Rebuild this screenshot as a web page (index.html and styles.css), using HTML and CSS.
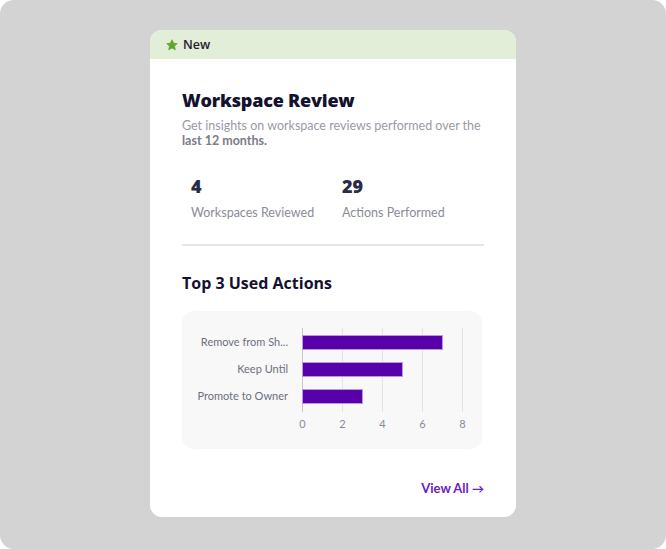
FILE: index.html
```html
<!DOCTYPE html>
<html lang="en">
<head>
  <meta charset="UTF-8">
  <title>Workspace Review</title>
  <link rel="stylesheet" href="styles.css">
</head>
<body>
  <div class="frame">
    <div class="card">
      <div class="banner">
        <svg class="star" width="12" height="12" viewBox="0 0 24 24"><path d="M12 1.5l3.2 6.9 7.3.8-5.5 5 1.6 7.3L12 17.8l-6.6 3.7 1.6-7.3-5.5-5 7.3-.8z" fill="#5ea52f" stroke="#5ea52f" stroke-width="1.5" stroke-linejoin="round"/></svg>
        <span>New</span>
      </div>
      <div class="content">
        <h1>Workspace Review</h1>
        <p class="sub">Get insights on workspace reviews performed over the <b>last 12 months.</b></p>

        <div class="stats">
          <div class="stat">
            <div class="num">4</div>
            <div class="label">Workspaces Reviewed</div>
          </div>
          <div class="stat">
            <div class="num">29</div>
            <div class="label">Actions Performed</div>
          </div>
        </div>

        <h2>Top 3 Used Actions</h2>
        <div class="chart">
          <svg width="300" height="138" viewBox="0 0 300 138">
            <g stroke="#e4e4e6" stroke-width="1">
              <line x1="160.5" y1="17" x2="160.5" y2="101"/>
              <line x1="200.5" y1="17" x2="200.5" y2="101"/>
              <line x1="240.5" y1="17" x2="240.5" y2="101"/>
              <line x1="280.5" y1="17" x2="280.5" y2="101"/>
            </g>
            <line x1="120.5" y1="17" x2="120.5" y2="101" stroke="#c9c9cc"/>
            <g fill="#5800aa" stroke="#b99ae2" stroke-width="1">
              <rect x="120.5" y="24.5" width="140" height="14"/>
              <rect x="120.5" y="51.5" width="100" height="14"/>
              <rect x="120.5" y="78.5" width="60" height="14"/>
            </g>
            <g class="ylab" text-anchor="end">
              <text x="106" y="35">Remove from Sh...</text>
              <text x="106" y="62">Keep Until</text>
              <text x="106" y="89">Promote to Owner</text>
            </g>
            <g class="xlab" text-anchor="middle">
              <text x="120.5" y="117">0</text>
              <text x="160.5" y="117">2</text>
              <text x="200.5" y="117">4</text>
              <text x="240.5" y="117">6</text>
              <text x="280.5" y="117">8</text>
            </g>
          </svg>
        </div>

        <div class="footer">
          <a href="#" class="view-all">View All <span class="arrow">&#8594;</span></a>
        </div>
      </div>
    </div>
  </div>
</body>
</html>
```

FILE: styles.css
```css
body {
  margin: 0;
  background: #ffffff;
  font-family: 'Lato', 'Open Sans', sans-serif;
}
.frame {
  width: 666px;
  height: 549px;
  background: #d3d3d3;
  border-radius: 14px;
  display: flex;
  align-items: flex-start;
  justify-content: center;
  padding-top: 30px;
  box-sizing: border-box;
}
.card {
  width: 366px;
  height: 487px;
  background: #ffffff;
  border-radius: 12px;
  overflow: hidden;
  display: flex;
  flex-direction: column;
}
.banner {
  height: 29px;
  background: #e2eed8;
  display: flex;
  align-items: center;
  padding-left: 16px;
  gap: 5px;
  font-family: 'Open Sans', sans-serif;
  font-size: 12.5px;
  font-weight: 600;
  color: #1e2130;
}
.content {
  flex: 1;
  padding: 30px 32px 0 32px;
  display: flex;
  flex-direction: column;
}
h1 {
  margin: 0;
  font-family: 'Open Sans', sans-serif;
  font-weight: 800;
  font-size: 18px;
  line-height: 22px;
  color: #14122e;
  letter-spacing: -0.2px;
}
.sub {
  margin: 7px 0 0 0;
  font-size: 12.5px;
  line-height: 15px;
  color: #9a9aa6;
}
.sub b {
  color: #7b7c88;
  font-weight: 700;
}
.stats {
  display: flex;
  padding: 27px 0 24px 9px;
  border-bottom: 2px solid #e6e6ea;
}
.stat {
  width: 151px;
  flex-shrink: 0;
}
.num {
  font-family: 'Open Sans', sans-serif;
  font-weight: 800;
  font-size: 18px;
  line-height: 22px;
  color: #2a2c45;
}
.label {
  margin-top: 8px;
  font-size: 12.5px;
  color: #8a8b98;
}
h2 {
  margin: 27px 0 0 0;
  font-family: 'Open Sans', sans-serif;
  font-size: 16px;
  line-height: 20px;
  font-weight: 700;
  color: #14122e;
}
.chart {
  margin-top: 18px;
  width: 300px;
  height: 138px;
  background: #f8f8f9;
  border-radius: 12px;
}
.chart svg {
  display: block;
}
.ylab text {
  font-family: 'Lato', sans-serif;
  font-size: 11px;
  fill: #6e6f7c;
}
.xlab text {
  font-family: 'Lato', sans-serif;
  font-size: 11px;
  fill: #8a8b98;
}
.footer {
  margin-top: auto;
  padding-bottom: 21px;
  display: flex;
  justify-content: flex-end;
}
.view-all {
  font-size: 13px;
  font-weight: 700;
  color: #6a1cc0;
  text-decoration: none;
}
.view-all .arrow {
  font-size: 12px;
}
```
